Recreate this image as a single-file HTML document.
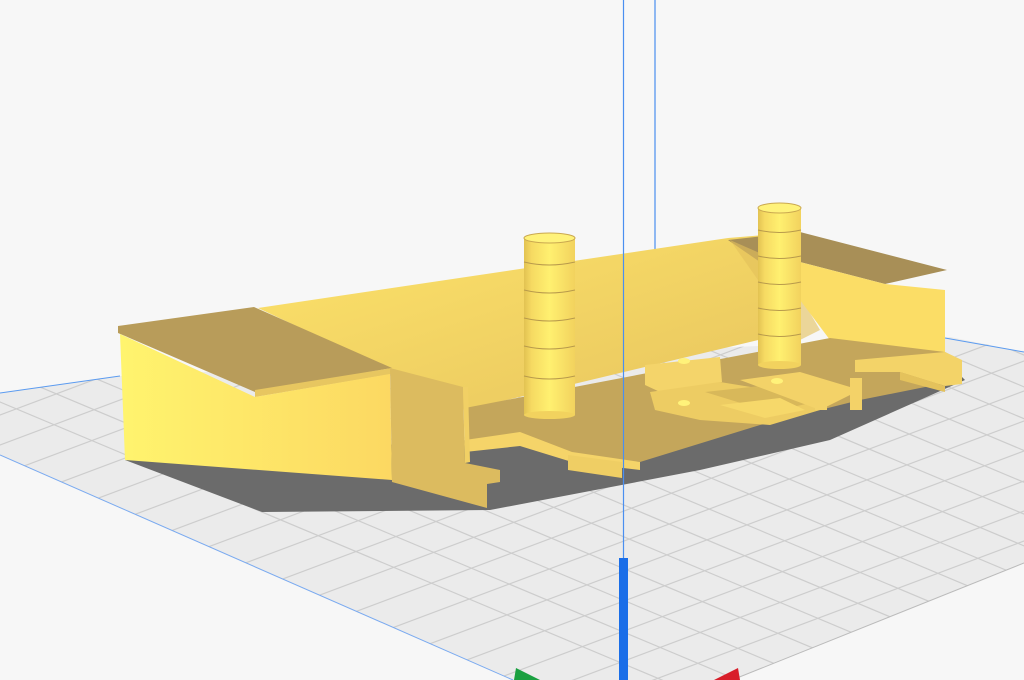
<!DOCTYPE html>
<html><head><meta charset="utf-8"><style>html,body{margin:0;padding:0;background:#f7f7f7;width:1024px;height:680px;overflow:hidden}svg{display:block;position:absolute;left:0;top:0}</style></head>
<body>
<svg width="1024" height="680" viewBox="0 0 1024 680" xmlns="http://www.w3.org/2000/svg">
<defs>
<clipPath id="plate"><polygon points="0,393 120,376 950,337 1024,352 1024,563 732,680 513,680 0,455"/></clipPath>
<linearGradient id="cyl" x1="0" x2="1" y1="0" y2="0"><stop offset="0" stop-color="#e2c252"/><stop offset="0.15" stop-color="#f6da62"/><stop offset="0.5" stop-color="#fff070"/><stop offset="1" stop-color="#f2d25e"/></linearGradient>
<linearGradient id="front" x1="0" x2="1" y1="0" y2="0"><stop offset="0" stop-color="#fff46e"/><stop offset="1" stop-color="#fcd862"/></linearGradient>
<linearGradient id="back" x1="0" x2="1" y1="0" y2="1"><stop offset="0" stop-color="#fde36a"/><stop offset="1" stop-color="#e7c45e"/></linearGradient>
</defs>
<polygon points="0,393 120,376 950,337 1024,352 1024,563 732,680 513,680 0,455" fill="#ebebeb"/>
<g clip-path="url(#plate)" stroke="#cdcdcd" stroke-width="1.2">
<g>
<line x1="-600" y1="150" x2="900" y2="780"/><line x1="-560" y1="135" x2="940" y2="765"/><line x1="-520" y1="120" x2="980" y2="750"/><line x1="-480" y1="105" x2="1020" y2="735"/><line x1="-440" y1="90" x2="1060" y2="720"/><line x1="-400" y1="75" x2="1100" y2="705"/><line x1="-360" y1="60" x2="1140" y2="690"/><line x1="-320" y1="45" x2="1180" y2="675"/><line x1="-280" y1="30" x2="1220" y2="660"/><line x1="-240" y1="15" x2="1260" y2="645"/><line x1="-200" y1="0" x2="1300" y2="630"/><line x1="-160" y1="-15" x2="1340" y2="615"/><line x1="-120" y1="-30" x2="1380" y2="600"/><line x1="-80" y1="-45" x2="1420" y2="585"/><line x1="-40" y1="-60" x2="1460" y2="570"/><line x1="0" y1="-75" x2="1500" y2="555"/><line x1="40" y1="-90" x2="1540" y2="540"/><line x1="80" y1="-105" x2="1580" y2="525"/><line x1="120" y1="-120" x2="1620" y2="510"/><line x1="160" y1="-135" x2="1660" y2="495"/><line x1="200" y1="-150" x2="1700" y2="480"/><line x1="240" y1="-165" x2="1740" y2="465"/><line x1="280" y1="-180" x2="1780" y2="450"/><line x1="320" y1="-195" x2="1820" y2="435"/><line x1="360" y1="-210" x2="1860" y2="420"/><line x1="400" y1="-225" x2="1900" y2="405"/><line x1="440" y1="-240" x2="1940" y2="390"/><line x1="480" y1="-255" x2="1980" y2="375"/><line x1="520" y1="-270" x2="2020" y2="360"/><line x1="560" y1="-285" x2="2060" y2="345"/><line x1="600" y1="-300" x2="2100" y2="330"/>
</g>
<g>
<line x1="-200" y1="1000" x2="1400" y2="400"/><line x1="-240" y1="985" x2="1360" y2="385"/><line x1="-280" y1="970" x2="1320" y2="370"/><line x1="-320" y1="955" x2="1280" y2="355"/><line x1="-360" y1="940" x2="1240" y2="340"/><line x1="-400" y1="925" x2="1200" y2="325"/><line x1="-440" y1="910" x2="1160" y2="310"/><line x1="-480" y1="895" x2="1120" y2="295"/><line x1="-520" y1="880" x2="1080" y2="280"/><line x1="-560" y1="865" x2="1040" y2="265"/><line x1="-600" y1="850" x2="1000" y2="250"/><line x1="-640" y1="835" x2="960" y2="235"/><line x1="-680" y1="820" x2="920" y2="220"/><line x1="-720" y1="805" x2="880" y2="205"/><line x1="-760" y1="790" x2="840" y2="190"/><line x1="-800" y1="775" x2="800" y2="175"/><line x1="-840" y1="760" x2="760" y2="160"/><line x1="-880" y1="745" x2="720" y2="145"/><line x1="-920" y1="730" x2="680" y2="130"/><line x1="-160" y1="1015" x2="1440" y2="415"/><line x1="-120" y1="1030" x2="1480" y2="430"/><line x1="-80" y1="1045" x2="1520" y2="445"/><line x1="-40" y1="1060" x2="1560" y2="460"/><line x1="0" y1="1075" x2="1600" y2="475"/><line x1="40" y1="1090" x2="1640" y2="490"/><line x1="80" y1="1105" x2="1680" y2="505"/>
</g>
</g>
<polyline points="0,393 120,376" stroke="#5b9bf0" stroke-width="1" fill="none"/>
<polyline points="945,338 1024,352" stroke="#5b9bf0" stroke-width="1" fill="none"/>
<polyline points="0,455 513,680" stroke="#7aaaf0" stroke-width="1" fill="none"/>
<polyline points="1024,563 732,680" stroke="#bbb" stroke-width="1" fill="none"/>
<polygon points="125,460 262,512 490,510 700,470 830,440 965,380 945,360 470,440" fill="#6b6b6b"/>
<line x1="655" y1="0" x2="655" y2="250" stroke="#4a8ff0" stroke-width="1.2"/>
<polygon points="258,308 728,238 800,232 800,330 465,410 390,370" fill="url(#back)"/>
<polygon points="728,240 800,232 947,270 885,284 800,262 760,262" fill="#a88f57"/>
<polygon points="730,240 780,262 820,330 800,340" fill="#e2c05a" opacity="0.6"/>
<polygon points="800,262 885,284 945,290 945,355 830,340 800,300" fill="#fbdd66"/>
<polygon points="465,408 830,338 945,352 960,360 960,380 860,400 760,425 640,462 570,455 520,438 465,445" fill="#c4a65b"/>
<polygon points="465,440 520,432 572,452 640,462 640,470 572,462 520,446 465,452" fill="#f5d469"/>
<polygon points="855,360 945,352 962,360 962,384 945,386 900,372 855,372" fill="#f3d368"/>
<polygon points="900,372 945,386 945,392 900,380" fill="#e4c25c"/>
<polygon points="645,365 720,357 722,382 660,392 645,385" fill="#f4d46a"/>
<polygon points="650,392 720,382 800,395 820,410 770,425 700,420 655,410" fill="#edcc63"/>
<polygon points="705,392 760,386 815,402 770,412" fill="#d8b85a"/>
<polygon points="720,405 780,398 805,410 765,418" fill="#f6d86a"/>
<polygon points="740,380 800,372 860,390 820,410" fill="#f3d268"/>
<ellipse cx="684" cy="361" rx="6" ry="3" fill="#fff27a"/>
<ellipse cx="684" cy="403" rx="6" ry="3" fill="#fff27a"/>
<ellipse cx="777" cy="381" rx="6" ry="3" fill="#fff27a"/>
<rect x="815" y="385" width="12" height="25" fill="#f3d268"/>
<rect x="850" y="378" width="12" height="32" fill="#f3d268"/>
<polygon points="118,326 254,307 392,368 255,392 118,333" fill="#b89c5a"/>
<polygon points="255,390 392,368 392,374 255,397" fill="#e7c660"/>
<polygon points="120,334 255,397 390,374 392,480 125,460" fill="url(#front)"/>
<polygon points="390,368 463,387 465,463 500,470 500,482 487,484 487,508 392,482" fill="#dcbb5f"/>
<polygon points="463,387 468,387 470,462 465,463" fill="#f1d065"/>
<polygon points="568,455 622,462 622,478 568,470" fill="#efce64"/>
<rect x="524" y="238" width="51" height="177" fill="url(#cyl)"/>
<ellipse cx="549.5" cy="415" rx="25.5" ry="4" fill="#f2d25e"/>
<ellipse cx="549.5" cy="238" rx="25.5" ry="5" fill="#fff27a" stroke="#caa850" stroke-width="1"/>
<g stroke="#b89a4c" stroke-width="1" fill="none">
<path d="M524 262 Q549 268 575 262"/><path d="M524 290 Q549 296 575 290"/><path d="M524 318 Q549 324 575 318"/><path d="M524 346 Q549 352 575 346"/><path d="M524 376 Q549 382 575 376"/>
</g>
<rect x="758" y="208" width="43" height="157" fill="url(#cyl)"/>
<ellipse cx="779.5" cy="365" rx="21.5" ry="4" fill="#f2d25e"/>
<ellipse cx="779.5" cy="208" rx="21.5" ry="5" fill="#fff27a" stroke="#caa850" stroke-width="1"/>
<g stroke="#b89a4c" stroke-width="1" fill="none">
<path d="M758 230 Q779 235 801 230"/><path d="M758 256 Q779 261 801 256"/><path d="M758 282 Q779 287 801 282"/><path d="M758 308 Q779 313 801 308"/><path d="M758 334 Q779 339 801 334"/>
</g>
<line x1="623.5" y1="0" x2="623.5" y2="560" stroke="#4a8ff0" stroke-width="1.2"/>
<rect x="619" y="558" width="9" height="122" fill="#1a6ee8"/>
<polygon points="514,680 516,668 540,680" fill="#1aa040"/>
<polygon points="714,680 738,668 740,680" fill="#d81e2a"/>
</svg>
</body></html>
